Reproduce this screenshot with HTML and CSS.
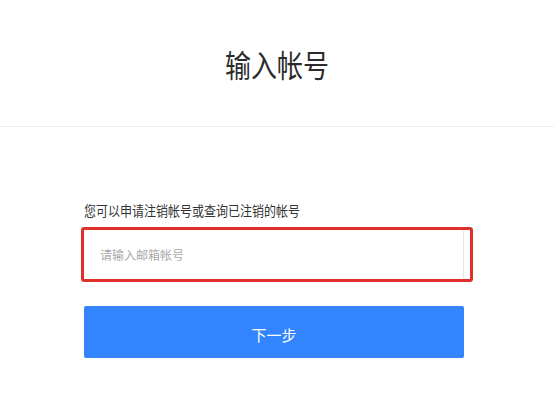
FILE: index.html
```html
<!DOCTYPE html>
<html lang="zh-CN">
<head>
<meta charset="utf-8">
<title>输入帐号</title>
<link rel="stylesheet" href="styles.css">
</head>
<body>
  <header class="header">
    <h1 class="title">输入帐号</h1>
  </header>
  <main class="form">
    <p class="label">您可以申请注销帐号或查询已注销的帐号</p>
    <div class="highlight">
      <input class="input" type="text" placeholder="请输入邮箱帐号">
    </div>
    <button class="btn" type="button">下一步</button>
  </main>
</body>
</html>
```
FILE: styles.css
```css
* { box-sizing: border-box; }
html, body {
  margin: 0;
  padding: 0;
  background: #fff;
  font-family: "Noto Sans CJK SC", "Noto Sans", sans-serif;
  color: #333;
}
.header {
  height: 127px;
  display: flex;
  align-items: center;
  justify-content: center;
  border-bottom: 1px solid #efefef;
}
.title {
  margin: 0;
  font-size: 26px;
  font-weight: 400;
  color: #2b2b2b;
  transform: scaleY(1.18);
}
.form {
  width: 380px;
  margin-left: 84px;
  padding-top: 75px;
}
.label {
  margin: 0;
  font-size: 12px;
  line-height: 16px;
  color: #333;
  transform: scaleY(1.1);
  transform-origin: left top;
}
.highlight {
  margin-top: 9px;
  margin-left: -3px;
  width: 392px;
  border: 3px solid #e0302c;
  border-radius: 3px;
  padding-right: 6px;
}
.input {
  display: block;
  width: 380px;
  height: 49px;
  margin: 0;
  border: 1px solid #fff;
  border-right-color: #e6e6e6;
  padding: 0 15px;
  font-family: inherit;
  font-size: 12px;
  color: #333;
  outline: none;
  background: #fff;
}
.input::placeholder {
  color: #a9a9a9;
}
.btn {
  display: block;
  width: 380px;
  height: 52px;
  margin-top: 24px;
  border: none;
  border-radius: 2px;
  background: #3385ff;
  color: #fff;
  font-family: inherit;
  font-size: 15px;
  padding: 4px 0 0;
  cursor: pointer;
}
```
